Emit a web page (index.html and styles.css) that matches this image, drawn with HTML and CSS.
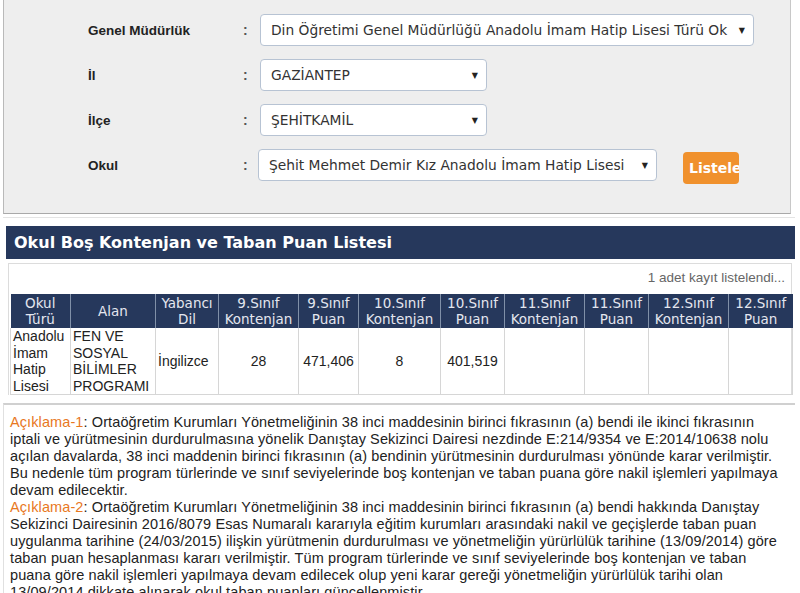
FILE: index.html
```html
<!DOCTYPE html>
<html lang="tr">
<head>
<meta charset="utf-8">
<title>Okul Boş Kontenjan ve Taban Puan Listesi</title>
<link rel="stylesheet" href="styles.css">
</head>
<body>
<div class="panel">
  <div class="form">
    <div class="row">
      <div class="label">Genel Müdürlük</div>
      <div class="colon">:</div>
      <div class="select s-wide"><span class="val">Din Öğretimi Genel Müdürlüğü Anadolu İmam Hatip Lisesi Türü Ok</span><span class="arrow">&#9660;</span></div>
    </div>
    <div class="row">
      <div class="label">İl</div>
      <div class="colon">:</div>
      <div class="select s-short"><span class="val">GAZİANTEP</span><span class="arrow">&#9660;</span></div>
    </div>
    <div class="row">
      <div class="label">İlçe</div>
      <div class="colon">:</div>
      <div class="select s-short"><span class="val">ŞEHİTKAMİL</span><span class="arrow">&#9660;</span></div>
    </div>
    <div class="row">
      <div class="label">Okul</div>
      <div class="colon">:</div>
      <div class="select s-mid"><span class="val">Şehit Mehmet Demir Kız Anadolu İmam Hatip Lisesi</span><span class="arrow">&#9660;</span></div>
      <div class="btn">Listele</div>
    </div>
  </div>
</div>
<div class="sep"></div>
<div class="titlebar">Okul Boş Kontenjan ve Taban Puan Listesi</div>
<div class="listbox">
  <div class="count">1 adet kayıt listelendi...</div>
  <table class="grid">
    <colgroup>
      <col style="width:60px"><col style="width:85px"><col style="width:63px"><col style="width:80px"><col style="width:60px"><col style="width:82px"><col style="width:64px"><col style="width:80px"><col style="width:64px"><col style="width:80px"><col style="width:64px">
    </colgroup>
    <thead>
      <tr>
        <th>Okul<br>Türü</th>
        <th>Alan</th>
        <th>Yabancı<br>Dil</th>
        <th>9.Sınıf<br>Kontenjan</th>
        <th>9.Sınıf<br>Puan</th>
        <th>10.Sınıf<br>Kontenjan</th>
        <th>10.Sınıf<br>Puan</th>
        <th>11.Sınıf<br>Kontenjan</th>
        <th>11.Sınıf<br>Puan</th>
        <th>12.Sınıf<br>Kontenjan</th>
        <th>12.Sınıf<br>Puan</th>
      </tr>
    </thead>
    <tbody>
      <tr>
        <td class="l">Anadolu İmam Hatip Lisesi</td>
        <td class="l">FEN VE SOSYAL BİLİMLER PROGRAMI</td>
        <td class="l">İngilizce</td>
        <td>28</td>
        <td>471,406</td>
        <td>8</td>
        <td>401,519</td>
        <td></td>
        <td></td>
        <td></td>
        <td></td>
      </tr>
    </tbody>
  </table>
</div>
<div class="notes">
  <p><span class="hl">Açıklama-1</span>: Ortaöğretim Kurumları Yönetmeliğinin 38 inci maddesinin birinci fıkrasının (a) bendi ile ikinci fıkrasının<br>iptali ve yürütmesinin durdurulmasına yönelik Danıştay Sekizinci Dairesi nezdinde E:214/9354 ve E:2014/10638 nolu<br>açılan davalarda, 38 inci maddenin birinci fıkrasının (a) bendinin yürütmesinin durdurulması yönünde karar verilmiştir.<br>Bu nedenle tüm program türlerinde ve sınıf seviyelerinde boş kontenjan ve taban puana göre nakil işlemleri yapılmaya<br>devam edilecektir.</p>
  <p><span class="hl">Açıklama-2</span>: Ortaöğretim Kurumları Yönetmeliğinin 38 inci maddesinin birinci fıkrasının (a) bendi hakkında Danıştay<br>Sekizinci Dairesinin 2016/8079 Esas Numaralı kararıyla eğitim kurumları arasındaki nakil ve geçişlerde taban puan<br>uygulanma tarihine (24/03/2015) ilişkin yürütmenin durdurulması ve yönetmeliğin yürürlülük tarihine (13/09/2014) göre<br>taban puan hesaplanması kararı verilmiştir. Tüm program türlerinde ve sınıf seviyelerinde boş kontenjan ve taban<br>puana göre nakil işlemleri yapılmaya devam edilecek olup yeni karar gereği yönetmeliğin yürürlülük tarihi olan<br>13/09/2014 dikkate alınarak okul taban puanları güncellenmiştir.</p>
</div>
</body>
</html>
```
FILE: styles.css
```css
html, body {
  margin: 0;
  padding: 0;
  background: #ffffff;
  overflow: hidden;
}
body {
  font-family: "Liberation Sans", Arial, sans-serif;
  color: #222;
}
.panel {
  margin-left: 3px;
  width: 788px;
  height: 214px;
  background: #eeeeee;
  border-left: 1px solid #b9b9b9;
  border-right: 1px solid #c8c8c8;
  border-bottom: 1px solid #a9a9a9;
  box-sizing: border-box;
  padding-top: 14px;
}
.form {
  display: flex;
  flex-direction: column;
  gap: 13px;
}
.row {
  display: flex;
  align-items: center;
  height: 32px;
}
.label {
  width: 155px;
  padding-left: 84px;
  font-weight: bold;
  font-size: 13.5px;
  color: #222;
}
.colon {
  width: 17px;
  font-size: 14px;
  font-weight: bold;
  color: #555;
}
.select {
  height: 32px;
  box-sizing: border-box;
  background: #fff;
  border: 1px solid #b7c3d3;
  border-radius: 4px;
  display: flex;
  align-items: center;
  justify-content: space-between;
  padding: 0 8px 0 10px;
  font-family: "DejaVu Sans", Verdana, sans-serif;
  font-size: 13.8px;
  color: #333;
  white-space: nowrap;
  overflow: hidden;
}
.s-wide { width: 494px; }
.s-short { width: 227px; }
.s-mid { width: 399px; margin-left: -2px; }
.arrow {
  font-size: 8px;
  color: #222;
}
.btn {
  margin-left: 26px;
  margin-top: 6px;
  width: 56px;
  height: 32px;
  box-sizing: border-box;
  background: #f0912d;
  border-radius: 4px;
  color: #fff;
  font-family: "DejaVu Sans", Verdana, sans-serif;
  font-weight: bold;
  font-size: 14px;
  line-height: 32px;
  padding-left: 6px;
  overflow: hidden;
  white-space: nowrap;
}
.sep {
  margin: 3px 5px 0 3px;
  height: 1px;
  background: #e4e4e4;
}
.titlebar {
  margin: 8px 5px 0 6px;
  height: 33px;
  background: #26385c;
  color: #fff;
  font-family: "DejaVu Sans", Verdana, sans-serif;
  font-weight: bold;
  font-size: 16px;
  line-height: 33px;
  padding-left: 8px;
}
.listbox {
  margin: 4px 8px 0 8px;
  border: 1px solid #dcdcdc;
  border-bottom: none;
  background: #fff;
  padding: 0 0 0 1px;
}
.count {
  height: 30px;
  line-height: 28px;
  text-align: right;
  font-size: 13.5px;
  color: #666;
  padding-right: 6px;
}
.grid {
  border-collapse: collapse;
  table-layout: fixed;
  width: 782px;
}
.grid th {
  background: #26385c;
  color: #e4e6ef;
  font-family: "DejaVu Sans", Verdana, sans-serif;
  font-weight: normal;
  font-size: 13.5px;
  line-height: 16px;
  height: 34px;
  padding: 0;
  border-left: 1px solid #8090a8;
  text-align: center;
  vertical-align: middle;
  white-space: nowrap;
  overflow: hidden;
}
.grid th:first-child { border-left: none; }
.grid td {
  font-size: 14px;
  line-height: 16.5px;
  color: #222;
  height: 66px;
  padding: 0 2px;
  border: 1px solid #d6d6d6;
  border-top: none;
  text-align: center;
  vertical-align: middle;
}
.grid td.l { text-align: left; }
.notes {
  margin: 8px 5px 0 3px;
  border-top: 2px solid #d0d0d0;
  border-left: 1px solid #e0e0e0;
  padding: 9px 0 0 6px;
  font-size: 14.5px;
  letter-spacing: 0.1px;
  line-height: 17px;
  color: #222;
}
.notes p { margin: 0; white-space: nowrap; }
.hl { color: #e8781e; }
```
